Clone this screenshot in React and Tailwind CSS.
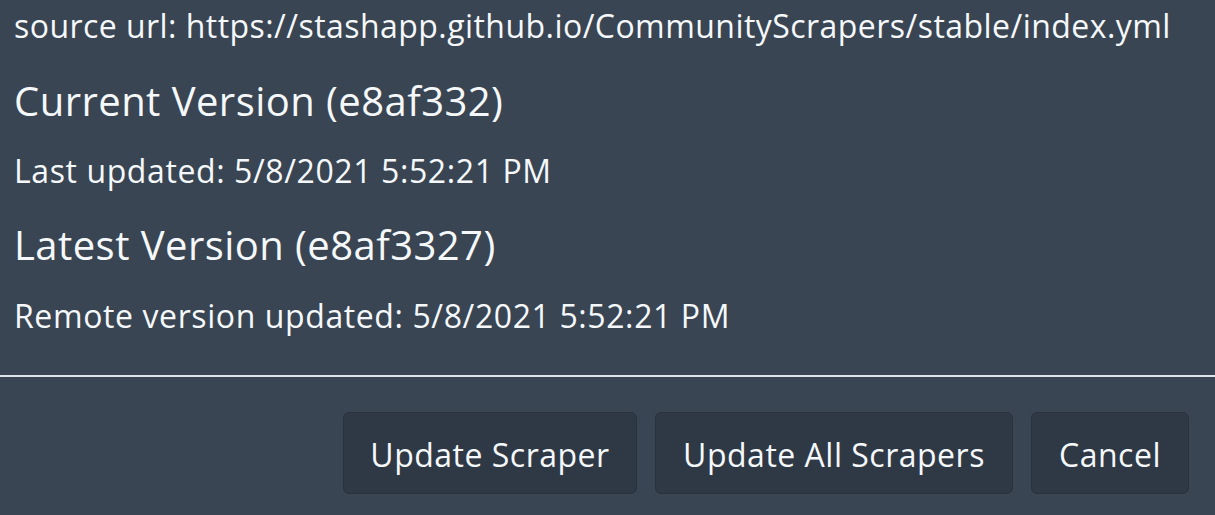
import React from 'react';

const font = { fontFamily: '"Open Sans", "Noto Sans", sans-serif' };

const ModalButton = ({ children, width }) => (
  <button
    className={`h-[82px] ${width} flex items-center justify-center pt-[4px] rounded-[6px] border border-[#2a323c] bg-[#2f3945] text-[32px] tracking-[0.5px] text-[#f5f8fa]`}
  >
    {children}
  </button>
);

export default function App() {
  return (
    <div
      className="w-full h-[515px] overflow-hidden bg-[#394552] text-[#f5f8fa]"
      style={font}
    >
      {/* corps */}
      <div className="px-[14px]">
        <p className="pt-[3px] text-[32px] leading-[45px] whitespace-nowrap tracking-[0.45px]">
          source url: https://stashapp.github.io/CommunityScrapers/stable/index.yml
        </p>
        <h5 className="mt-[30px] text-[40px] leading-[45px] tracking-[0.45px]">Current Version (e8af332)</h5>
        <p className="mt-[25px] text-[32px] leading-[45px] tracking-[0.6px]">Last updated: 5/8/2021 5:52:21 PM</p>
        <h5 className="mt-[29px] text-[40px] leading-[45px] tracking-[0.45px]">Latest Version (e8af3327)</h5>
        <p className="mt-[26px] text-[32px] leading-[45px] tracking-[0.6px]">Remote version updated: 5/8/2021 5:52:21 PM</p>
      </div>

      {/* séparateur */}
      <div className="mt-[37px] h-[2px] bg-[#dde3ea]" />

      {/* pied */}
      <div className="flex justify-end gap-[18px] pt-[35px] pr-[26px]">
        <ModalButton width="w-[294px]">Update Scraper</ModalButton>
        <ModalButton width="w-[358px]">Update All Scrapers</ModalButton>
        <ModalButton width="w-[158px]">Cancel</ModalButton>
      </div>
    </div>
  );
}
